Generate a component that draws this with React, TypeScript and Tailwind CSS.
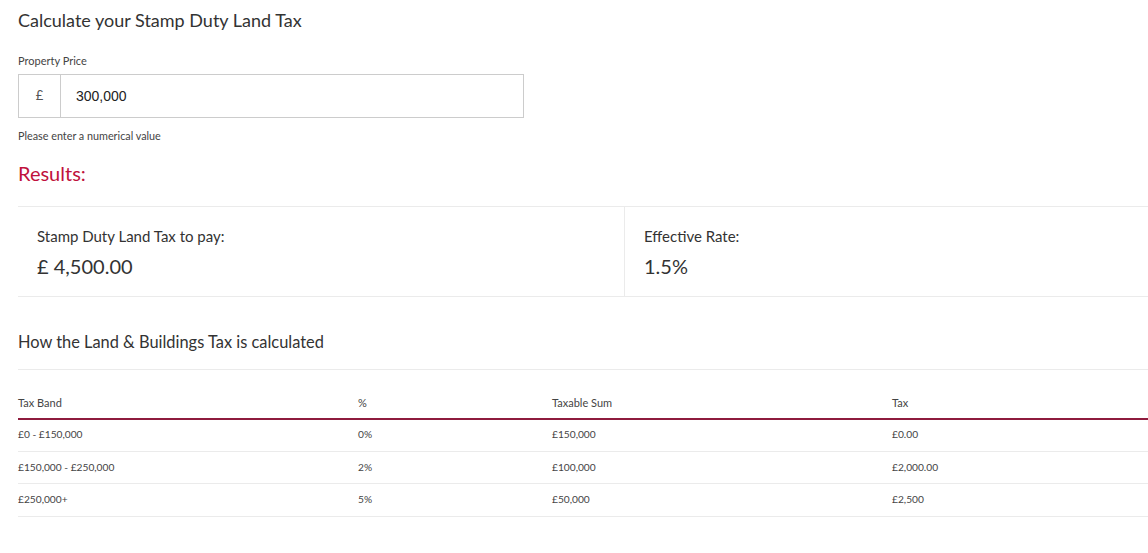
const rows = [
  { band: "£0 - £150,000", pct: "0%", sum: "£150,000", tax: "£0.00" },
  { band: "£150,000 - £250,000", pct: "2%", sum: "£100,000", tax: "£2,000.00" },
  { band: "£250,000+", pct: "5%", sum: "£50,000", tax: "£2,500" },
];

export default function App() {
  return (
    <div className="min-h-[553px] overflow-hidden bg-white pl-[18px] font-['Lato',sans-serif] text-[#333]">
      <h1 className="pt-[8px] text-[18px] leading-[24px] text-[#333]">Calculate your Stamp Duty Land Tax</h1>

      <label className="mt-[22px] block text-[11px] leading-[14px] text-[#444]">Property Price</label>
      <div className="mt-[6px] flex h-[44px] w-[506px] border border-[#ccc]">
        <span className="flex w-[42px] items-center justify-center border-r border-[#ccc] text-[13px] text-[#555]">£</span>
        <input
          className="flex-1 px-[15px] font-['Liberation_Sans',Arial,sans-serif] text-[14px] text-[#222] outline-none"
          defaultValue="300,000"
        />
      </div>
      <p className="mt-[11px] text-[10.8px] leading-[14px] text-[#444]">Please enter a numerical value</p>

      <h2 className="mt-[17px] text-[20px] leading-[26px] text-[#c0123c]">Results:</h2>

      <div className="mt-[20px] flex h-[91px] w-[1200px] border-y border-[#ebebeb]">
        <div className="w-[607px] border-r border-[#ebebeb] pl-[19px] pt-[20px]">
          <div className="text-[15px] leading-[18px] text-[#333]">Stamp Duty Land Tax to pay:</div>
          <div className="mt-[9px] text-[20px] leading-[24px] text-[#333]">£ 4,500.00</div>
        </div>
        <div className="pl-[19px] pt-[20px]">
          <div className="text-[15px] leading-[18px] text-[#333]">Effective Rate:</div>
          <div className="mt-[9px] text-[20px] leading-[24px] text-[#333]">1.5%</div>
        </div>
      </div>

      <h3 className="mt-[34px] text-[16.4px] leading-[22px] text-[#333]">How the Land &amp; Buildings Tax is calculated</h3>

      <table className="mt-[16px] w-[1200px] border-t border-[#ebebeb] text-left text-[10.2px] text-[#444]">
        <thead>
          <tr className="h-[49px] border-b-2 border-[#8e1b3d] align-bottom text-[11px]">
            <th className="w-[340px] pb-[6px] font-normal">Tax Band</th>
            <th className="w-[194px] pb-[6px] font-normal">%</th>
            <th className="w-[340px] pb-[6px] font-normal">Taxable Sum</th>
            <th className="pb-[6px] font-normal">Tax</th>
          </tr>
        </thead>
        <tbody>
          {rows.map((r) => (
            <tr key={r.band} className="h-[32.5px] border-b border-[#ebebeb]">
              <td>{r.band}</td>
              <td>{r.pct}</td>
              <td>{r.sum}</td>
              <td>{r.tax}</td>
            </tr>
          ))}
        </tbody>
      </table>
    </div>
  );
}
